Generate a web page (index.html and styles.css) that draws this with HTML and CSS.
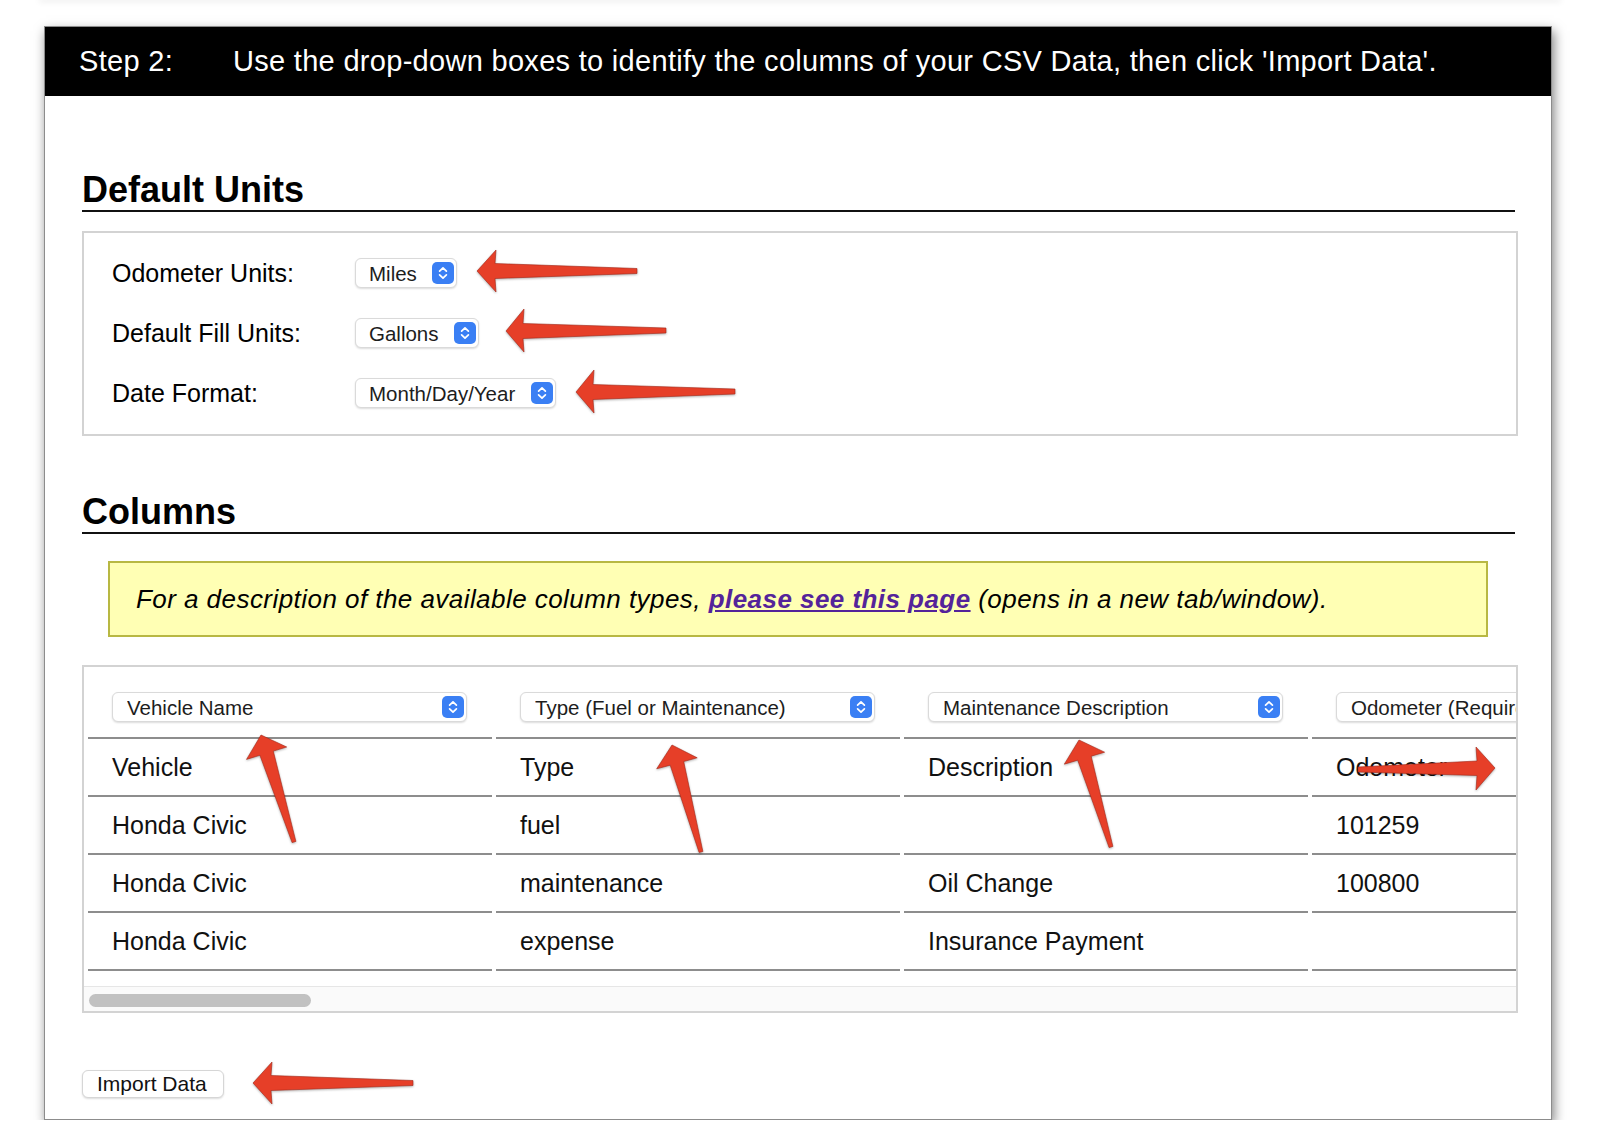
FILE: index.html
```html
<!DOCTYPE html>
<html lang="en">
<head>
    <meta charset="UTF-8">
    <meta name="viewport" content="width=device-width, initial-scale=1.0">
    <title>Import CSV Data - Step 2</title>
    <link rel="stylesheet" href="styles.css">
</head>
<body>
    <div class="top-edge"></div>

    <div class="window">
        <div class="step-bar">
            <span class="step-num">Step 2:</span>
            <span class="step-text">Use the drop-down boxes to identify the columns of your CSV Data, then click 'Import Data'.</span>
        </div>

        <div class="content">
            <h2 class="section-title">Default Units</h2>
            <div class="units-box">
                <label for="odoUnits">Odometer Units:</label>
                <span class="select-wrap">
                    <select id="odoUnits">
                        <option selected>Miles</option>
                        <option>Km</option>
                    </select>
                    <svg class="stepper" viewBox="0 0 22 22"><rect width="22" height="22" rx="5"/><path d="M7.6 9.2 11 5.8l3.4 3.4M7.6 12.8 11 16.2l3.4-3.4"/></svg>
                </span>

                <label for="fillUnits">Default Fill Units:</label>
                <span class="select-wrap">
                    <select id="fillUnits">
                        <option selected>Gallons</option>
                        <option>Liters</option>
                    </select>
                    <svg class="stepper" viewBox="0 0 22 22"><rect width="22" height="22" rx="5"/><path d="M7.6 9.2 11 5.8l3.4 3.4M7.6 12.8 11 16.2l3.4-3.4"/></svg>
                </span>

                <label for="dateFormat">Date Format:</label>
                <span class="select-wrap">
                    <select id="dateFormat">
                        <option selected>Month/Day/Year</option>
                        <option>Day/Month/Year</option>
                        <option>Year/Month/Day</option>
                    </select>
                    <svg class="stepper" viewBox="0 0 22 22"><rect width="22" height="22" rx="5"/><path d="M7.6 9.2 11 5.8l3.4 3.4M7.6 12.8 11 16.2l3.4-3.4"/></svg>
                </span>
            </div>

            <h2 class="section-title columns-title">Columns</h2>
            <div class="notice">
                For a description of the available column types,&nbsp;<a href="#" target="_blank">please see this page</a>&nbsp;(opens in a new tab/window).
            </div>

            <div class="table-box">
                <div class="table-viewport">
                    <table class="csv-table">
                        <thead>
                            <tr>
                                <th>
                                    <span class="select-wrap">
                                        <select>
                                            <option>Ignore this column</option>
                                            <option selected>Vehicle Name</option>
                                            <option>Type (Fuel or Maintenance)</option>
                                            <option>Maintenance Description</option>
                                            <option>Odometer (Required)</option>
                                            <option>Date (Required)</option>
                                        </select>
                                        <svg class="stepper" viewBox="0 0 22 22"><rect width="22" height="22" rx="5"/><path d="M7.6 9.2 11 5.8l3.4 3.4M7.6 12.8 11 16.2l3.4-3.4"/></svg>
                                    </span>
                                </th>
                                <th>
                                    <span class="select-wrap">
                                        <select>
                                            <option>Ignore this column</option>
                                            <option>Vehicle Name</option>
                                            <option selected>Type (Fuel or Maintenance)</option>
                                            <option>Maintenance Description</option>
                                            <option>Odometer (Required)</option>
                                            <option>Date (Required)</option>
                                        </select>
                                        <svg class="stepper" viewBox="0 0 22 22"><rect width="22" height="22" rx="5"/><path d="M7.6 9.2 11 5.8l3.4 3.4M7.6 12.8 11 16.2l3.4-3.4"/></svg>
                                    </span>
                                </th>
                                <th>
                                    <span class="select-wrap">
                                        <select>
                                            <option>Ignore this column</option>
                                            <option>Vehicle Name</option>
                                            <option>Type (Fuel or Maintenance)</option>
                                            <option selected>Maintenance Description</option>
                                            <option>Odometer (Required)</option>
                                            <option>Date (Required)</option>
                                        </select>
                                        <svg class="stepper" viewBox="0 0 22 22"><rect width="22" height="22" rx="5"/><path d="M7.6 9.2 11 5.8l3.4 3.4M7.6 12.8 11 16.2l3.4-3.4"/></svg>
                                    </span>
                                </th>
                                <th>
                                    <span class="select-wrap">
                                        <select>
                                            <option>Ignore this column</option>
                                            <option>Vehicle Name</option>
                                            <option>Type (Fuel or Maintenance)</option>
                                            <option>Maintenance Description</option>
                                            <option selected>Odometer (Required)</option>
                                            <option>Date (Required)</option>
                                        </select>
                                        <svg class="stepper" viewBox="0 0 22 22"><rect width="22" height="22" rx="5"/><path d="M7.6 9.2 11 5.8l3.4 3.4M7.6 12.8 11 16.2l3.4-3.4"/></svg>
                                    </span>
                                </th>
                            </tr>
                        </thead>
                        <tbody>
                            <tr><td>Vehicle</td><td>Type</td><td>Description</td><td>Odometer</td></tr>
                            <tr><td>Honda Civic</td><td>fuel</td><td></td><td>101259</td></tr>
                            <tr><td>Honda Civic</td><td>maintenance</td><td>Oil Change</td><td>100800</td></tr>
                            <tr><td>Honda Civic</td><td>expense</td><td>Insurance Payment</td><td></td></tr>
                        </tbody>
                    </table>
                </div>
                <div class="scrollbar"><div class="scrollbar-thumb"></div></div>
            </div>

            <button class="import-btn">Import Data</button>
        </div>
    </div>

    <!-- red callout arrows drawn over the screenshot -->
    <svg class="annotations" viewBox="0 0 1600 1148">
        <polygon points="477,271 496,250 495,263.5 637,268.5 637,273.5 495,278.5 496,292"/>
        <polygon points="506,331 524,309 523,323.5 666,328 666,333 523,338.5 524,352"/>
        <polygon points="576,392 594,370 593,384.5 735,389 735,394 593,399.5 594,413"/>
        <polygon points="261,735 286.7,747 273.3,751.1 295.9,841.4 292.1,842.6 259.9,755.3 246.5,759.4"/>
        <polygon points="672,745 697.2,757.8 683.7,761.5 702.9,851.5 699.1,852.5 670.2,765.2 656.7,768.8"/>
        <polygon points="1079,740 1104.6,752.2 1091.2,756.2 1112.9,846.4 1109.1,847.6 1077.7,760.2 1064.3,764.2"/>
        <polygon points="1495,768 1476,747 1477,761 1358,767 1358,772 1477,775.5 1476,790"/>
        <polygon points="253,1083 272,1062 271,1075.5 413,1080.5 413,1085.5 271,1090.5 272,1104"/>
    </svg>
</body>
</html>
```

FILE: styles.css
```css
* {
    box-sizing: border-box;
}

body {
    margin: 0;
    background-color: #fff;
    color: #000;
    font-family: "Liberation Sans", Arial, sans-serif;
}

.top-edge {
    height: 0;
    margin: 0 40px;
    box-shadow: 0 0 6px 1px rgba(0,0,0,0.15);
}

.window {
    width: 1508px;
    margin: 26px 0 0 44px;
    border: 1px solid #8c8c8c;
    background-color: #fff;
    box-shadow: 2px 5px 11px rgba(0,0,0,0.5);
}

.step-bar {
    height: 69px;
    display: flex;
    align-items: center;
    padding-left: 34px;
    background-color: #000;
    color: #fff;
    font-size: 29px;
    letter-spacing: 0.3px;
}

.step-num {
    width: 154px;
    flex-shrink: 0;
}

.content {
    padding: 0 33px 21px 37px;
}

.section-title {
    margin: 74px 3px 19px 0;
    padding: 0;
    font-size: 36px;
    line-height: 40px;
    font-weight: bold;
    border-bottom: 2px solid #111;
}

.columns-title {
    margin-top: 56px;
    margin-bottom: 27px;
}

/* Default units */
.units-box {
    display: grid;
    grid-template-columns: 243px 1fr;
    row-gap: 30px;
    align-items: center;
    padding: 25px 28px 26px;
    border: 2px solid #d3d3d3;
}

.units-box label {
    font-size: 25px;
}

.units-box .select-wrap {
    justify-self: start;
}

.select-wrap {
    position: relative;
    display: block;
}

.select-wrap select {
    -webkit-appearance: none;
    appearance: none;
    display: block;
    height: 30px;
    margin: 0;
    padding: 0 39px 0 13px;
    font-family: "Liberation Sans", Arial, sans-serif;
    font-size: 20.5px;
    color: #1d1d1d;
    background-color: #fff;
    border: 1px solid #dadada;
    border-radius: 6px;
    box-shadow: 0 1px 2px rgba(0,0,0,0.14);
    outline: none;
}

.stepper {
    position: absolute;
    top: 4px;
    right: 3px;
    width: 22px;
    height: 22px;
    pointer-events: none;
}

.stepper rect {
    fill: #3a7ff4;
}

.stepper path {
    fill: none;
    stroke: #fff;
    stroke-width: 1.7;
    stroke-linecap: round;
    stroke-linejoin: round;
}

/* Columns */
.notice {
    height: 76px;
    display: flex;
    align-items: center;
    margin: 0 30px 0 26px;
    padding: 0 26px;
    background-color: #ffffb4;
    border: 2px solid #b8b843;
    font-size: 26px;
    font-style: italic;
    letter-spacing: 0.45px;
    white-space: nowrap;
}

.notice a {
    color: #54239a;
    font-weight: bold;
    text-decoration: underline;
}

.table-box {
    margin-top: 28px;
    border: 2px solid #d3d3d3;
}

.table-viewport {
    overflow: hidden;
    padding-bottom: 15px;
}

.scrollbar {
    height: 25px;
    padding: 7px 5px 4px;
    background-color: #fafafa;
    border-top: 1px solid #e6e6e6;
}

.scrollbar-thumb {
    width: 222px;
    height: 13px;
    background-color: #c1c1c1;
    border-radius: 7px;
}

.csv-table {
    border-collapse: separate;
    border-spacing: 4px 0;
}

.csv-table th,
.csv-table td {
    width: 404px;
    min-width: 404px;
    padding: 0 25px 0 24px;
    border-bottom: 2px solid #8d8d8d;
    text-align: left;
    font-weight: normal;
    white-space: nowrap;
}

.csv-table th {
    padding-top: 25px;
    padding-bottom: 15px;
    vertical-align: top;
}

.csv-table select {
    width: 355px;
    padding-left: 14px;
}

.csv-table td {
    height: 58px;
    font-size: 25px;
    color: #111;
    vertical-align: middle;
}

.import-btn {
    display: block;
    height: 28px;
    margin-top: 57px;
    padding: 0 16px 0 14px;
    font-family: "Liberation Sans", Arial, sans-serif;
    font-size: 21px;
    color: #111;
    background-color: #fff;
    border: 1px solid #d6d6d6;
    border-radius: 6px;
    box-shadow: 0 1px 2px rgba(0,0,0,0.14);
    cursor: pointer;
}

.annotations {
    position: absolute;
    top: 0;
    left: 0;
    width: 1600px;
    height: 1148px;
    pointer-events: none;
}

.annotations polygon {
    fill: #e63f28;
    stroke: #a32617;
    stroke-width: 0.6;
    stroke-linejoin: round;
    filter: drop-shadow(0 1px 1px rgba(0,0,0,0.3));
}
```
